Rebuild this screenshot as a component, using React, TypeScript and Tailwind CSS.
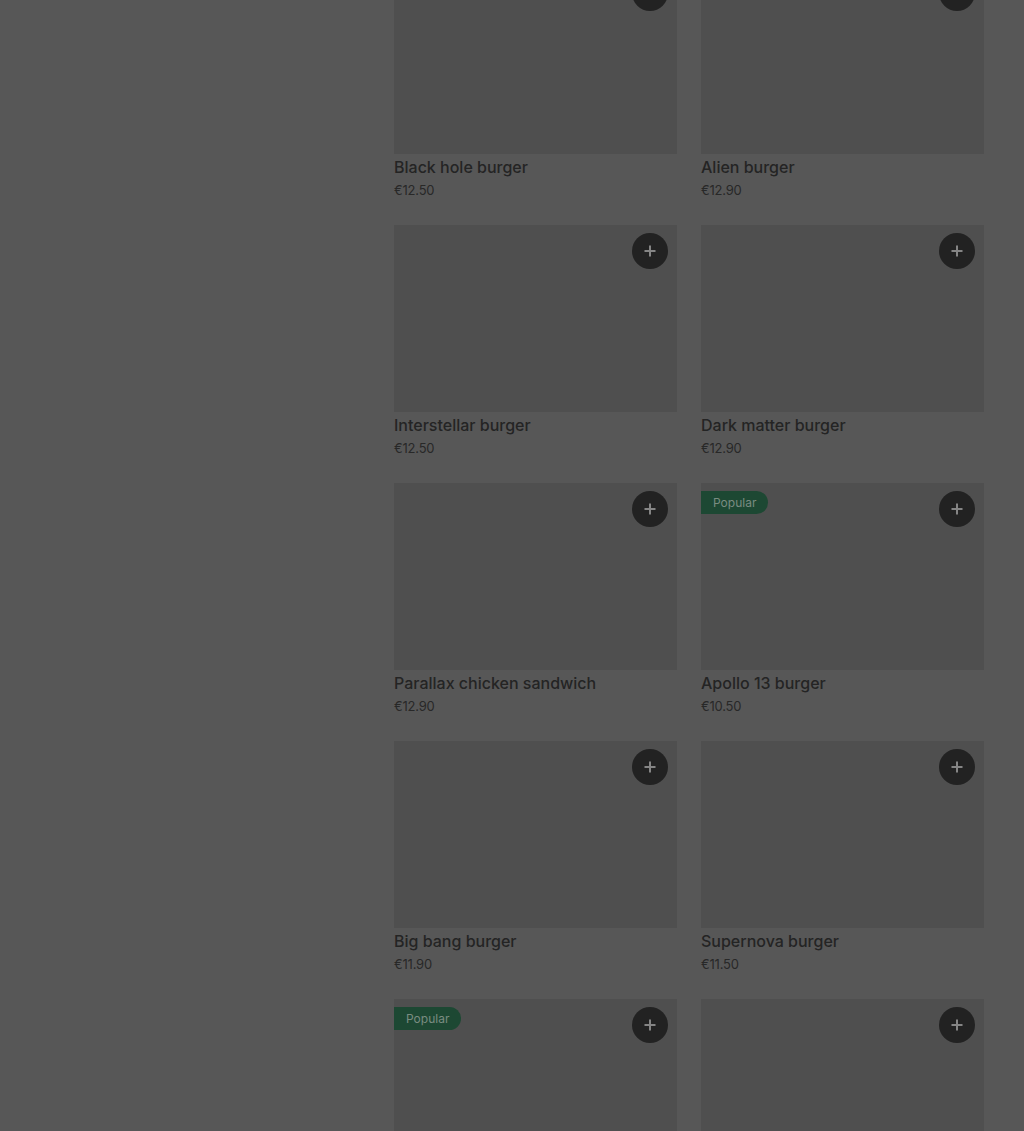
import React from "react";

type Item = { name: string; price: string; popular?: boolean };

const items: Item[] = [
  { name: "Black hole burger", price: "€12.50" },
  { name: "Alien burger", price: "€12.90" },
  { name: "Interstellar burger", price: "€12.50" },
  { name: "Dark matter burger", price: "€12.90" },
  { name: "Parallax chicken sandwich", price: "€12.90" },
  { name: "Apollo 13 burger", price: "€10.50", popular: true },
  { name: "Big bang burger", price: "€11.90" },
  { name: "Supernova burger", price: "€11.50" },
  { name: "", price: "", popular: true },
  { name: "", price: "" },
];

function Card({ item }: { item: Item }) {
  return (
    <div className="flex flex-col">
      <div className="relative h-[187px] bg-[#4f4f4f]">
        {item.popular && (
          <span className="absolute left-0 top-[8px] flex h-[23px] items-center rounded-r-full bg-[#1d4833] pl-3 pr-3 text-[12px] text-[#7a8c81]">
            Popular
          </span>
        )}
        <button className="absolute right-[9px] top-[8px] flex h-[36px] w-[36px] items-center justify-center rounded-full bg-[#222222]">
          <svg width="14" height="14" viewBox="0 0 14 14">
            <path d="M7 1.5v11M1.5 7h11" stroke="#858585" strokeWidth="2" />
          </svg>
        </button>
      </div>
      {item.name && (
        <>
          <div className="mt-[1px] text-[16px] leading-[24px] font-medium text-[#242424]">{item.name}</div>
          <div className="text-[13px] leading-[22px] tracking-[-0.2px] text-[#282828]">{item.price}</div>
        </>
      )}
    </div>
  );
}

export default function App() {
  return (
    <div
      className="h-[1131px] w-full overflow-hidden bg-[#575757]"
      style={{ fontFamily: "Inter, 'Noto Sans', sans-serif" }}
    >
      <div className="flex">
        <div className="w-[394px] shrink-0" />
        <div className="-mt-[33px] grid w-[590px] grid-cols-2 gap-x-[24px] gap-y-[24px]">
          {items.map((it, i) => (
            <Card key={i} item={it} />
          ))}
        </div>
      </div>
    </div>
  );
}
